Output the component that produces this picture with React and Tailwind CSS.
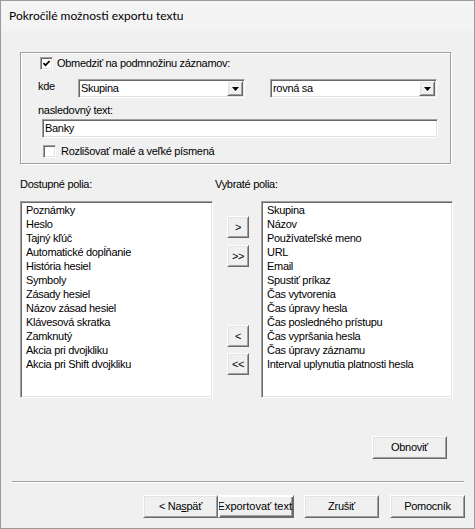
import React from "react";

const raised =
  "border border-t-white border-l-white border-r-[#696969] border-b-[#696969] shadow-[inset_1px_1px_0_#e3e3e3,inset_-1px_-1px_0_#a0a0a0]";
const sunken =
  "border border-t-[#a0a0a0] border-l-[#a0a0a0] border-r-white border-b-white shadow-[inset_1px_1px_0_#696969,inset_-1px_-1px_0_#e3e3e3]";

const available = [
  "Poznámky",
  "Heslo",
  "Tajný kľúč",
  "Automatické dopĺňanie",
  "História hesiel",
  "Symboly",
  "Zásady hesiel",
  "Názov zásad hesiel",
  "Klávesová skratka",
  "Zamknutý",
  "Akcia pri dvojkliku",
  "Akcia pri Shift dvojkliku",
];

const selected = [
  "Skupina",
  "Názov",
  "Používateľské meno",
  "URL",
  "Email",
  "Spustiť príkaz",
  "Čas vytvorenia",
  "Čas úpravy hesla",
  "Čas posledného prístupu",
  "Čas vypršania hesla",
  "Čas úpravy záznamu",
  "Interval uplynutia platnosti hesla",
];

const Button = ({ className = "", children }) => (
  <div
    className={`${raised} bg-[#f0f0f0] flex items-center whitespace-nowrap overflow-hidden ${className}`}
  >
    {children}
  </div>
);

const Checkbox = ({ checked }) => (
  <div
    className={`${sunken} w-[13px] h-[13px] bg-white flex items-center justify-center shrink-0`}
  >
    {checked && (
      <svg width="9" height="9" viewBox="0 0 9 9">
        <path d="M1.5 4.2 L3.5 6.3 L7.6 2" stroke="black" strokeWidth="1.8" fill="none" />
      </svg>
    )}
  </div>
);

const Combo = ({ value, className = "" }) => (
  <div className={`${sunken} bg-white h-[19px] p-[1px] flex ${className}`}>
    <span className="flex-1 pl-[1px] leading-[15px]">{value}</span>
    <div className={`${raised} w-[16px] h-full bg-[#f0f0f0] flex items-center justify-center`}>
      <svg width="7" height="4" viewBox="0 0 7 4">
        <path d="M0 0 H7 L3.5 4 Z" fill="black" />
      </svg>
    </div>
  </div>
);

const FieldList = ({ items, className = "" }) => (
  <div className={`${sunken} bg-white h-[197px] pt-[1px] pl-[5px] ${className}`}>
    {items.map((item) => (
      <div key={item} className="h-[14px] leading-[14px] whitespace-nowrap">
        {item}
      </div>
    ))}
  </div>
);

export default function App() {
  return (
    <div className="w-[475px] h-[529px] bg-[#f0f0f0] border border-[#9b9b9b] flex flex-col overflow-hidden text-black text-[11px] tracking-[-0.3px] font-['Liberation_Sans',Arial,sans-serif]">
      <div className="h-[30px] shrink-0 bg-[#f4f4f4] flex items-center pl-[8px] text-[12px] tracking-normal font-['Lato',sans-serif]">
        Pokročilé možnosti exportu textu
      </div>

      {/* filter group */}
      <div className="ml-[19px] mt-[21px] w-[431px] h-[112px] shrink-0 border border-[#a0a0a0] shadow-[inset_1px_1px_0_#fff,1px_1px_0_#fff] flex flex-col">
        <div className="mt-[4px] pl-[19px] h-[13px] flex items-center">
          <Checkbox checked />
          <span className="ml-[4px] leading-[13px]">Obmedziť na podmnožinu záznamov:</span>
        </div>
        <div className="mt-[9px] h-[19px] flex items-start">
          <span className="ml-[17px] w-[40px] leading-[15px]">kde</span>
          <Combo value="Skupina" className="w-[167px]" />
          <Combo value="rovná sa" className="ml-[25px] w-[167px]" />
        </div>
        <div className="mt-[6px] pl-[17px] h-[13px] leading-[13px]">nasledovný text:</div>
        <div className={`${sunken} ml-[21px] mt-[2px] w-[396px] h-[19px] bg-white pl-[2px] leading-[17px]`}>
          Banky
        </div>
        <div className="mt-[7px] pl-[22px] h-[13px] flex items-center">
          <Checkbox />
          <span className="ml-[5px] leading-[13px]">Rozlišovať malé a veľké písmená</span>
        </div>
      </div>

      {/* field lists */}
      <div className="mt-[14px] h-[13px] flex leading-[13px]">
        <span className="ml-[19px] w-[195px]">Dostupné polia:</span>
        <span>Vybraté polia:</span>
      </div>
      <div className="mt-[10px] flex">
        <FieldList items={available} className="ml-[19px] w-[193px]" />
        <div className="ml-[14px] w-[22px] flex flex-col pt-[15px]">
          <Button className="h-[22px] justify-center">&gt;</Button>
          <Button className="h-[22px] mt-[7px] justify-center">&gt;&gt;</Button>
          <Button className="h-[22px] mt-[58px] justify-center">&lt;</Button>
          <Button className="h-[22px] mt-[6px] justify-center">&lt;&lt;</Button>
        </div>
        <FieldList items={selected} className="ml-[12px] w-[192px]" />
      </div>

      <div className="mt-[38px] flex">
        <Button className="ml-[371px] w-[75px] h-[23px] justify-center">Obnoviť</Button>
      </div>

      <div className="mt-[22px] ml-[11px] w-[452px] h-[2px] border-t border-t-[#a0a0a0] border-b border-b-white" />

      <div className="mt-[12px] flex">
        <Button className="ml-[142px] w-[75px] h-[23px] justify-center">
          &lt; Na<span className="underline">s</span>päť
        </Button>
        <Button className="w-[76px] h-[23px] justify-end pr-[1px] border-black tracking-normal shadow-[inset_1px_1px_0_#fff,inset_-1px_-1px_0_#696969,inset_-2px_-2px_0_#a0a0a0]">
          <span className="shrink-0">Exportovať text</span>
        </Button>
        <Button className="ml-[10px] w-[75px] h-[23px] justify-center">Zrušiť</Button>
        <Button className="ml-[11px] w-[75px] h-[23px] justify-center">Pomocník</Button>
      </div>
    </div>
  );
}
